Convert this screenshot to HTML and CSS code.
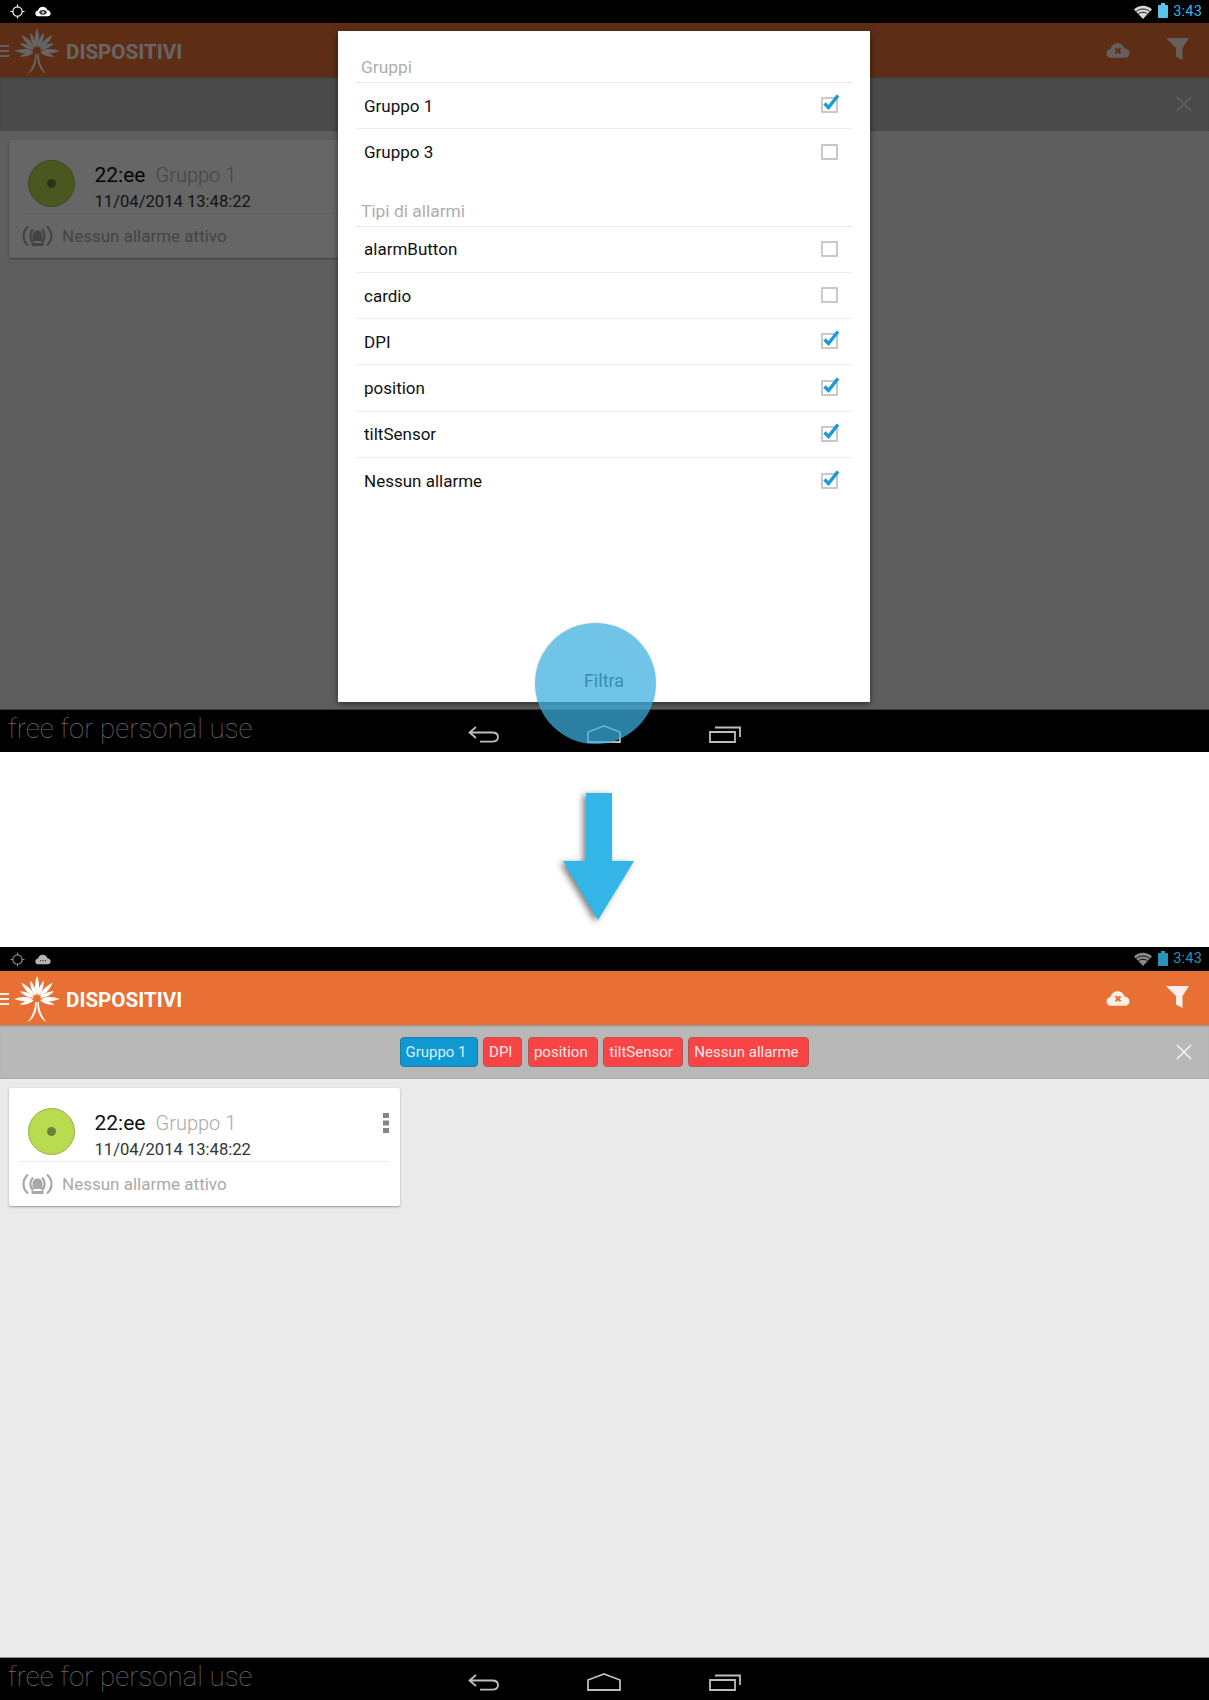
FILE: index.html
```html
<!DOCTYPE html>
<html lang="it">
<head>
<meta charset="utf-8">
<title>Dispositivi</title>
<link rel="stylesheet" href="styles.css">
</head>
<body>
<svg class="defs" width="0" height="0" aria-hidden="true">
  <defs>
    <path id="leaf" d="M0 -4C-2.800 -9 -2.600 -16 0 -23C2.600 -16 2.800 -9 0 -4Z"/>
    <symbol id="logo" viewBox="0 0 48 46">
      <g fill="currentColor" transform="translate(24 23)">
        <use href="#leaf" transform="rotate(-90)"/>
        <use href="#leaf" transform="rotate(-66) scale(.9 .82)"/>
        <use href="#leaf" transform="rotate(-44) scale(1 .98)"/>
        <use href="#leaf" transform="rotate(-20) scale(.9 .85)"/>
        <use href="#leaf" transform="rotate(0)"/>
        <use href="#leaf" transform="rotate(20) scale(.9 .85)"/>
        <use href="#leaf" transform="rotate(44) scale(1 .98)"/>
        <use href="#leaf" transform="rotate(66) scale(.9 .82)"/>
        <use href="#leaf" transform="rotate(90)"/>
        <use href="#leaf" transform="rotate(108) scale(.9 .8)"/>
        <use href="#leaf" transform="rotate(-108) scale(.9 .8)"/>
        <path d="M-2 3C-1.500 10 -5 18 -9.500 23C-4 20.500 .5 13 -.5 3Z"/>
        <path d="M2 3C1.500 10 5 18 9.500 23C4 20.500 -.5 13 .5 3Z"/>
      </g>
    </symbol>
    <symbol id="crosshair" viewBox="0 0 16 16">
      <circle cx="8" cy="8" r="5" fill="none" stroke="currentColor" stroke-width="1.2"/>
      <path d="M8 0.5V3.5M8 12.5V15.5M0.5 8H3.5M12.5 8H15.5" stroke="currentColor" stroke-width="1.2"/>
    </symbol>
    <path id="cloud" d="M5 15.500C2 15.500 .5 13.500 .5 11.200C.5 8.800 2.200 7 4.500 6.800C5.300 3.500 8 1 11.500 1C15 1 17.700 3.200 18.600 6.300C21.500 6.400 23.500 8.500 23.500 11C23.500 13.500 21.500 15.500 19 15.500Z"/>
    <symbol id="check" viewBox="0 0 19 20">
      <rect x="1" y="5" width="15" height="14" fill="none" stroke="#c4c4c4" stroke-width="1.8"/>
      <path d="M3.500 10.500L7.500 14.500L17 2.500" fill="none" stroke="#1a9ad6" stroke-width="3.400"/>
    </symbol>
    <symbol id="box" viewBox="0 0 19 20">
      <rect x="1" y="5" width="15" height="14" fill="none" stroke="#c4c4c4" stroke-width="1.8"/>
    </symbol>
    <symbol id="back" viewBox="0 0 31 17">
      <path d="M8 1L1.500 6.500L8 12M1.500 6.500H24C28 6.500 30 8.500 30 11C30 13.800 28 15.700 24 15.700H12" fill="none" stroke="currentColor" stroke-width="1.800"/>
    </symbol>
    <symbol id="home" viewBox="0 0 34 18">
      <path d="M1 7L17 1L33 7V17H1Z" fill="none" stroke="currentColor" stroke-width="1.800"/>
    </symbol>
    <symbol id="recent" viewBox="0 0 32 17">
      <path d="M1 6H26V16H1ZM6 1.500H31V11" fill="none" stroke="currentColor" stroke-width="1.800"/>
    </symbol>
    <symbol id="wifi" viewBox="0 0 18 14">
      <path d="M0 4.500C5 -.5 13 -.5 18 4.500L9 14Z" fill="currentColor"/>
      <path d="M2.200 6.500C6 3.200 12 3.200 15.800 6.500M4.400 8.800C7 6.800 11 6.800 13.600 8.800" fill="none" stroke="#000" stroke-width=".9"/>
    </symbol>
    <symbol id="funnel" viewBox="0 0 23 22">
      <path d="M0 0H23L16.500 10V22L10 18.500V10Z" fill="currentColor"/>
    </symbol>
    <symbol id="close" viewBox="0 0 16 16">
      <path d="M1 1L15 15M15 1L1 15" fill="none" stroke="currentColor" stroke-width="1.500"/>
    </symbol>
    <symbol id="kebab" viewBox="0 0 6 20">
      <path d="M0 0H6V5H0ZM0 7.500H6V12.500H0ZM0 15H6V20H0Z" fill="currentColor"/>
    </symbol>
    <symbol id="siren" viewBox="0 0 31 22">
      <path d="M6 1.500C0 7 0 15 6 20.500M11 4.500C7.500 8 7.500 14 11 17.500M25 1.500C31 7 31 15 25 20.500M20 4.500C23.500 8 23.500 14 20 17.500" fill="none" stroke="currentColor" stroke-width="2.200"/>
      <path d="M10.500 16V10.500C10.500 7.500 12.800 5.500 15.500 5.500C18.200 5.500 20.500 7.500 20.500 10.500V16ZM9.500 18H21.500V21H9.500Z" fill="currentColor"/>
    </symbol>
  </defs>
</svg>

<section class="screen screen-top">
  <header class="status">
    <svg class="status-pin"><use href="#crosshair"/></svg>
    <svg class="status-cloud" viewBox="0 0 24 16.500"><use href="#cloud" fill="#fff"/><ellipse cx="12" cy="9.500" rx="5.500" ry="3.500" fill="#333"/><circle cx="12" cy="9.500" r="1.800" fill="#ddd"/></svg>
    <svg class="status-wifi"><use href="#wifi"/></svg>
    <span class="status-battery"></span>
    <span class="status-time">3:43</span>
  </header>
  <div class="appbar">
    <span class="burger"></span>
    <svg class="logo"><use href="#logo"/></svg>
    <h1 class="app-title">DISPOSITIVI</h1>
    <svg class="act-cloud" viewBox="0 0 24 16.500"><use href="#cloud" fill="currentColor"/><path d="M9.500 6L14.500 11M14.500 6L9.500 11" stroke="#e97035" stroke-width="2.200"/></svg>
    <svg class="act-funnel"><use href="#funnel"/></svg>
  </div>
  <div class="filterbar">
    <svg class="filter-close"><use href="#close"/></svg>
  </div>
  <main class="content">
    <article class="card">
      <div class="card-head">
        <span class="state"><span class="state-dot"></span></span>
        <div class="card-text">
          <div class="card-title"><span class="card-name">22:ee</span><span class="card-group">Gruppo 1</span></div>
          <div class="card-date">11/04/2014 13:48:22</div>
        </div>
        <svg class="kebab"><use href="#kebab"/></svg>
      </div>
      <div class="card-foot">
        <svg class="siren"><use href="#siren"/></svg>
        <span>Nessun allarme attivo</span>
      </div>
    </article>
  </main>
  <footer class="nav">
    <span class="watermark">free for personal use</span>
    <svg class="nav-back"><use href="#back"/></svg>
    <svg class="nav-home"><use href="#home"/></svg>
    <svg class="nav-recent"><use href="#recent"/></svg>
  </footer>

  <div class="scrim">
    <div class="dialog">
      <h2 class="group-label">Gruppi</h2>
      <div class="row"><span>Gruppo 1</span><svg class="tick"><use href="#check"/></svg></div>
      <div class="row"><span>Gruppo 3</span><svg class="tick"><use href="#box"/></svg></div>
      <h2 class="group-label group-label-next">Tipi di allarmi</h2>
      <div class="row"><span>alarmButton</span><svg class="tick"><use href="#box"/></svg></div>
      <div class="row"><span>cardio</span><svg class="tick"><use href="#box"/></svg></div>
      <div class="row"><span>DPI</span><svg class="tick"><use href="#check"/></svg></div>
      <div class="row"><span>position</span><svg class="tick"><use href="#check"/></svg></div>
      <div class="row"><span>tiltSensor</span><svg class="tick"><use href="#check"/></svg></div>
      <div class="row"><span>Nessun allarme</span><svg class="tick"><use href="#check"/></svg></div>
      <div class="dialog-foot">Filtra</div>
    </div>
  </div>
  <span class="touch"></span>
</section>

<div class="transition">
  <svg class="arrow" viewBox="0 0 71 127"><path d="M23 0H49V68H71L35 127L0 68H23Z"/></svg>
</div>

<section class="screen screen-bottom">
  <header class="status">
    <svg class="status-pin"><use href="#crosshair"/></svg>
    <svg class="status-cloud" viewBox="0 0 24 16.500"><use href="#cloud" fill="#b5b5b5"/><circle cx="8.500" cy="10" r="1" fill="#333"/><circle cx="12" cy="10" r="1" fill="#333"/><circle cx="15.500" cy="10" r="1" fill="#333"/></svg>
    <svg class="status-wifi"><use href="#wifi"/></svg>
    <span class="status-battery"></span>
    <span class="status-time">3:43</span>
  </header>
  <div class="appbar">
    <span class="burger"></span>
    <svg class="logo"><use href="#logo"/></svg>
    <h1 class="app-title">DISPOSITIVI</h1>
    <svg class="act-cloud" viewBox="0 0 24 16.500"><use href="#cloud" fill="currentColor"/><path d="M9.500 6L14.500 11M14.500 6L9.500 11" stroke="#e97035" stroke-width="2.200"/></svg>
    <svg class="act-funnel"><use href="#funnel"/></svg>
  </div>
  <div class="filterbar">
    <div class="chips">
      <span class="chip chip-group">Gruppo 1</span>
      <span class="chip">DPI</span>
      <span class="chip">position</span>
      <span class="chip">tiltSensor</span>
      <span class="chip">Nessun allarme</span>
    </div>
    <svg class="filter-close"><use href="#close"/></svg>
  </div>
  <main class="content">
    <article class="card">
      <div class="card-head">
        <span class="state"><span class="state-dot"></span></span>
        <div class="card-text">
          <div class="card-title"><span class="card-name">22:ee</span><span class="card-group">Gruppo 1</span></div>
          <div class="card-date">11/04/2014 13:48:22</div>
        </div>
        <svg class="kebab"><use href="#kebab"/></svg>
      </div>
      <div class="card-foot">
        <svg class="siren"><use href="#siren"/></svg>
        <span>Nessun allarme attivo</span>
      </div>
    </article>
  </main>
  <footer class="nav">
    <span class="watermark">free for personal use</span>
    <svg class="nav-back"><use href="#back"/></svg>
    <svg class="nav-home"><use href="#home"/></svg>
    <svg class="nav-recent"><use href="#recent"/></svg>
  </footer>
</section>
</body>
</html>
```

FILE: styles.css
```css
* { box-sizing: border-box; }
html, body { margin: 0; padding: 0; background: #fff; }
body { font-family: Roboto, "Liberation Sans", sans-serif; color: #111; }
h1, h2 { margin: 0; font: inherit; }
svg { display: block; flex: none; }
.defs { position: absolute; }

.screen { position: relative; display: flex; flex-direction: column; overflow: hidden; }
.screen-top { height: 752px; }
.screen-bottom { height: 753px; }

/* status bar */
.status { height: 24px; flex: none; display: flex; align-items: center; padding: 0 7px 0 10px; background: #000; color: #fff; }
.screen-top .status { height: 23px; }
.status-pin { width: 15px; height: 15px; }
.status-cloud { width: 16px; height: 11px; margin-left: 10px; margin-right: auto; }
.status-wifi { width: 18px; height: 14px; color: #d8d8d8; margin-right: 1px; }
.status-battery { position: relative; width: 10px; height: 13px; margin-left: 5px; background: #5cc4ea; border-radius: 1px; }
.status-battery::before { content: ""; position: absolute; left: 3px; top: -2px; width: 4px; height: 2px; background: #5cc4ea; }
.status-time { margin-left: 5px; font-size: 14.500px; line-height: 20px; color: #33b5e5; letter-spacing: .2px; }
.screen-bottom .status-pin { color: #8c8c8c; }
.screen-bottom .status-wifi { color: #8a8a8a; }
.screen-bottom .status-battery, .screen-bottom .status-battery::before { background: #2c93ba; }
.screen-bottom .status-time { color: #2c93ba; }

/* action bar */
.appbar { height: 54px; flex: none; display: flex; align-items: center; background: #e97035; color: #fdf0e8; padding-right: 20px; }
.burger { width: 9px; height: 12px; margin-top: 1px; border-top: 2px solid #fdf0e8; border-bottom: 2px solid #fdf0e8; position: relative; }
.burger::after { content: ""; position: absolute; left: 0; right: 0; top: 3px; height: 2px; background: #fdf0e8; }
.logo { width: 48px; height: 46px; margin-left: 4px; margin-top: 1px; color: #fff; }
.app-title { margin-left: 5px; margin-top: 4px; font-size: 20.600px; line-height: 24px; font-weight: 700; color: #fff; margin-right: auto; }
.act-cloud { width: 24px; height: 17px; }
.act-funnel { width: 23px; height: 22px; margin-left: 36px; margin-top: -3px; color: #fdf0e8; }

/* filter strip */
.filterbar { height: 54px; flex: none; display: grid; grid-template-columns: 1fr auto 1fr; align-items: center; background: #b8b8b8; border-bottom: 1px solid #adadad; padding: 0 17px; box-shadow: inset 0 2px 2px -1px rgba(0,0,0,.22); }
.chips { grid-column: 2; display: flex; gap: 5.500px; }
.chip { height: 30px; padding: 0 9px 0 5px; display: flex; align-items: center; font-size: 15px; color: #ffe6e6; background: #f84444; border: 1px solid #b85252; border-radius: 4px; }
.chip.chip-group { padding: 0 10px 0 4px; background: #0f98d2; border-color: #1a7ea8; color: #d6f0fb; }
.filter-close { grid-column: 3; justify-self: end; width: 16px; height: 16px; color: #f5f5f5; }

/* content */
.content { flex: 1; background: #eaeaea; padding: 9px 0 0 9px; }
.card { width: 391px; height: 118px; background: #fff; border-radius: 2px; box-shadow: 0 1px 2px rgba(0,0,0,.35); }
.card-head { height: 73px; display: flex; align-items: flex-start; padding: 0 11px 0 19px; }
.state { width: 47px; height: 47px; margin-top: 20px; border-radius: 50%; background: #b8dc50; border: 1px solid #95ae4f; display: flex; align-items: center; justify-content: center; }
.state-dot { width: 9px; height: 9px; border-radius: 50%; background: #6f803c; }
.card-text { margin-left: 19.500px; margin-top: 22px; flex: 1; }
.card-title { display: flex; align-items: baseline; height: 26px; line-height: 26px; margin-bottom: 4px; }
.card-name { font-size: 21px; color: #111; }
.card-group { margin-left: 10px; font-size: 20px; font-weight: 300; color: #aaa; }
.card-date { font-size: 16.600px; line-height: 20px; color: #333; }
.kebab { width: 6px; height: 20px; margin-top: 25px; color: #858585; }
.card-foot { height: 45px; margin: 0 10px; padding-left: 3px; border-top: 1px solid #ececec; display: flex; align-items: center; gap: 9px; font-size: 17px; color: #aaa; }
.siren { width: 31px; height: 22px; color: #a8a8a8; }

/* system nav */
.nav { height: 42px; flex: none; display: flex; align-items: center; gap: 88px; background: #000; color: #bdbdbd; box-shadow: 0 -1px 0 #8f8f8f; position: relative; }
.watermark { width: 380px; margin-bottom: 4px; padding-left: 8px; font-size: 27.700px; line-height: 36px; font-weight: 100; color: #6d6d6d; white-space: nowrap; }
.nav-back { width: 31px; height: 17px; margin-top: 6px; }
.nav-home { width: 34px; height: 18px; margin-top: 6px; }
.nav-recent { width: 32px; height: 17px; margin-top: 6px; }

/* modal state */
.scrim { position: absolute; left: 0; right: 0; top: 23px; bottom: 42px; background: rgba(0,0,0,.6); }
.dialog { position: absolute; left: 338px; top: 8px; width: 532px; height: 671px; background: #fff; display: flex; flex-direction: column; padding: 26px 18px 0; box-shadow: 0 2px 6px rgba(0,0,0,.55); }
.group-label { font-size: 17.400px; line-height: 20px; height: 26px; padding: 0 0 5px 5px; color: #aeaeae; border-bottom: 1px solid #e6e6e6; }
.group-label-next { margin-top: 25px; }
.row { height: 46.300px; flex: none; display: flex; align-items: center; justify-content: space-between; padding: 0 12px 0 8px; font-size: 17px; color: #111; border-bottom: 1px solid #ececec; }
.row:has(+ .group-label), .row:has(+ .dialog-foot) { border-bottom: 0; }
.tick { width: 19px; height: 20px; margin-top: -5px; }
.dialog-foot { margin-top: auto; height: 44px; display: flex; align-items: center; justify-content: center; font-size: 18px; color: #333; }
.touch { position: absolute; left: 535px; top: 623px; width: 121px; height: 121px; border-radius: 50%; background: rgba(58,174,223,.73); box-shadow: 0 0 3px rgba(0,0,0,.15); }

/* arrow between the two states */
.transition { height: 195px; display: flex; justify-content: center; padding: 41px 12px 0 0; }
.arrow { width: 71px; height: 127px; fill: #33b5e8; filter: drop-shadow(-3px 2px 3px rgba(0,0,0,.5)); }
```
